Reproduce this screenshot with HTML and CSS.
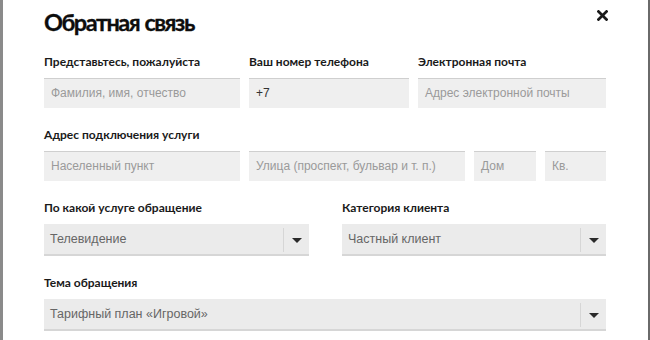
FILE: index.html
```html
<!DOCTYPE html>
<html lang="ru">
<head>
<meta charset="utf-8">
<title>Обратная связь</title>
<link rel="stylesheet" href="styles.css">
</head>
<body>
<div class="modal">
  <div class="header">
    <h1 class="title">Обратная связь</h1>
    <button class="close" aria-label="Закрыть">
      <svg width="11" height="11" viewBox="0 0 11 11"><path d="M1.5 1.5L9.5 9.5M9.5 1.5L1.5 9.5" stroke="#1a1a1a" stroke-width="2.7" stroke-linecap="square"/></svg>
    </button>
  </div>

  <div class="row row-contacts">
    <div class="field">
      <div class="label">Представьтесь, пожалуйста</div>
      <div class="input placeholder">Фамилия, имя, отчество</div>
    </div>
    <div class="field">
      <div class="label">Ваш номер телефона</div>
      <div class="input value">+7</div>
    </div>
    <div class="field">
      <div class="label">Электронная почта</div>
      <div class="input placeholder">Адрес электронной почты</div>
    </div>
  </div>

  <div class="group">
    <div class="label">Адрес подключения услуги</div>
    <div class="row row-address">
      <div class="input placeholder">Населенный пункт</div>
      <div class="input placeholder">Улица (проспект, бульвар и т. п.)</div>
      <div class="input placeholder">Дом</div>
      <div class="input placeholder">Кв.</div>
    </div>
  </div>

  <div class="row row-selects">
    <div class="field">
      <div class="label">По какой услуге обращение</div>
      <div class="select"><span class="select-text">Телевидение</span><span class="select-btn"><span class="arrow"></span></span></div>
    </div>
    <div class="field">
      <div class="label">Категория клиента</div>
      <div class="select"><span class="select-text">Частный клиент</span><span class="select-btn"><span class="arrow"></span></span></div>
    </div>
  </div>

  <div class="field field-topic">
    <div class="label">Тема обращения</div>
    <div class="select"><span class="select-text">Тарифный план «Игровой»</span><span class="select-btn"><span class="arrow"></span></span></div>
  </div>
</div>
</body>
</html>
```

FILE: styles.css
```css
html, body {
  margin: 0;
  padding: 0;
  background: #ffffff;
}

.modal {
  box-sizing: border-box;
  width: 650px;
  height: 340px;
  overflow: hidden;
  background: #ffffff;
  border-left: 3px solid #8a8a8a;
  border-right: 2px solid #6a6a6a;
  padding: 0 42px 0 41px;
  font-family: "Lato", "Liberation Sans", sans-serif;
  color: #1a1a1a;
}

.header {
  display: flex;
  justify-content: space-between;
  align-items: flex-start;
  height: 44px;
}

.title {
  margin: 7px 0 0 0;
  font-size: 23.5px;
  line-height: 30px;
  font-weight: 700;
  letter-spacing: -1.5px;
  word-spacing: 1px;
  color: #0d0d0d;
  -webkit-text-stroke: 0.3px #0d0d0d;
}

.close {
  border: 0;
  background: transparent;
  padding: 0;
  margin: 10px -2px 0 0;
  width: 11px;
  height: 11px;
  display: block;
}
.close svg { display: block; }

.label {
  font-size: 12px;
  font-weight: 700;
  line-height: 16px;
  color: #1a1a1a;
  margin-bottom: 8px;
}

.row {
  display: grid;
}

.row-contacts {
  margin-top: 10px;
  grid-template-columns: 196px 160px 188px;
  column-gap: 9px;
}

.group {
  margin-top: 19px;
}

.row-address {
  grid-template-columns: 196px 216px 62px 61px;
  column-gap: 9px;
}

.row-selects {
  margin-top: 19px;
  grid-template-columns: 265px 264px;
  column-gap: 33px;
}

.field-topic {
  margin-top: 19px;
}

.input {
  box-sizing: border-box;
  height: 30px;
  background: #efefef;
  border-top: 1px solid #cfcfcf;
  padding: 0 7px;
  font-family: "Liberation Sans", Arial, sans-serif;
  font-size: 12px;
  line-height: 29px;
  white-space: nowrap;
  overflow: hidden;
}

.placeholder { color: #9a9a9a; }
.value { color: #333; }

.select {
  box-sizing: border-box;
  height: 32px;
  background: #ebebeb;
  border-bottom: 2px solid #d6d6d6;
  display: flex;
  align-items: stretch;
  font-family: "Liberation Sans", Arial, sans-serif;
  font-size: 12.5px;
  color: #666;
}

.select-text {
  flex: 1;
  padding-left: 6px;
  line-height: 30px;
  white-space: nowrap;
}

.select-btn {
  width: 25px;
  border-left: 1px solid #d6d6d6;
  margin: 4px 0 2px 0;
  display: flex;
  align-items: center;
  justify-content: center;
}

.arrow {
  width: 0;
  height: 0;
  border-left: 5px solid transparent;
  border-right: 5px solid transparent;
  border-top: 5px solid #2a2a2a;
}
```
